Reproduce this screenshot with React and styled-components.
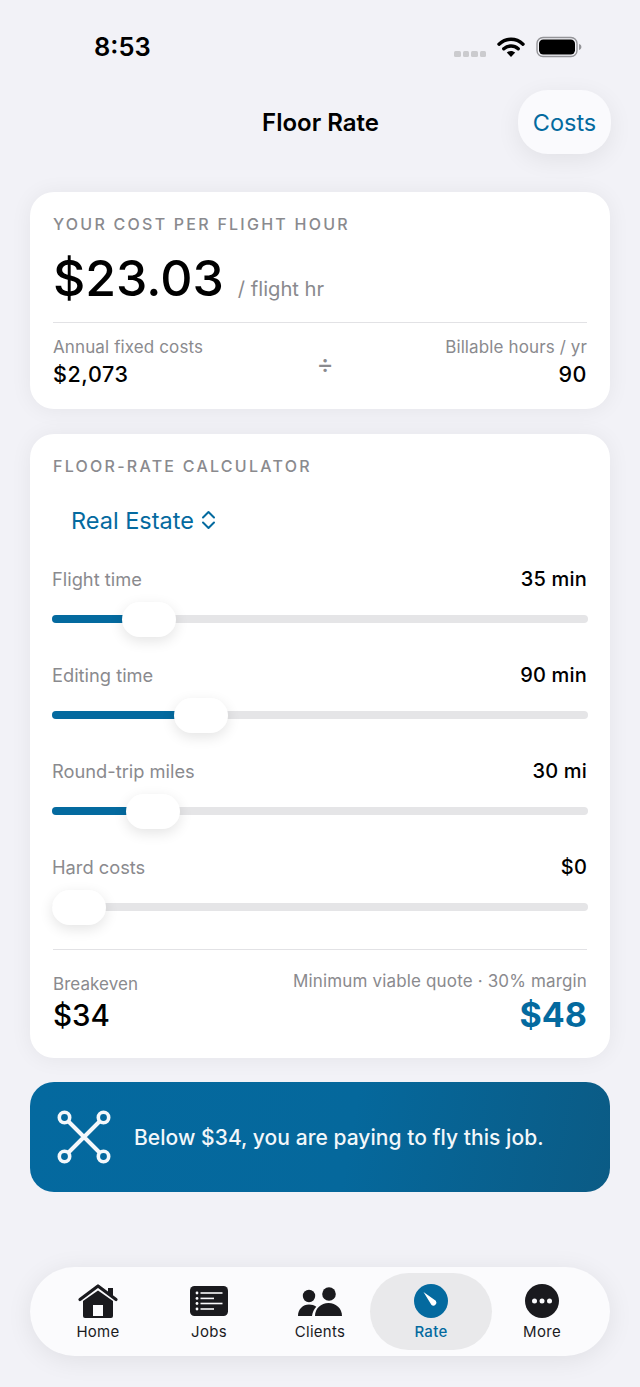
import React from "react";
import styled, { createGlobalStyle } from "styled-components";

const BLUE = "#046a9f";
const INK = "#1a1a1e";

const GlobalStyle = createGlobalStyle`
  html, body {
    margin: 0;
    padding: 0;
    background: #f2f2f7;
    font-family: Inter, "Liberation Sans", sans-serif;
    color: #000;
  }
  * { box-sizing: border-box; }
`;

const Page = styled.div`
  width: 640px;
  height: 1387px;
  display: flex;
  flex-direction: column;
  overflow: hidden;
  background: #f2f2f7;
`;
const StatusBar = styled.div`
  height: 90px;
  padding: 4px 58px 0 94px;
  display: flex;
  align-items: center;
  justify-content: space-between;
`;
const Time = styled.div`
  font-size: 25.5px;
  font-weight: 600;
  line-height: 30px;
`;
const StatusIcons = styled.div`
  display: flex;
  align-items: center;
`;
const SignalDots = styled.div`
  display: flex;
  gap: 2px;
  margin: 13px 11px 0 0;
`;
const SignalDot = styled.span`
  width: 6.5px;
  height: 6px;
  border-radius: 1.5px;
  background: #cbcbce;
`;
const Content = styled.div`
  flex: 1;
  display: flex;
  flex-direction: column;
  padding: 0 30px 31px;
`;
const Header = styled.div`
  height: 64px;
  margin: 0 -1px 38px 0;
  display: grid;
  grid-template-columns: 1fr auto 1fr;
  align-items: center;
`;
const Title = styled.div`
  grid-column: 2;
  font-size: 24px;
  font-weight: 600;
`;
const CostsButton = styled.div`
  justify-self: end;
  width: 93px;
  height: 64px;
  border-radius: 30px;
  background: #fafafd;
  box-shadow: 0 6px 24px rgba(0, 0, 0, 0.07);
  display: flex;
  align-items: center;
  justify-content: center;
  font-size: 23.5px;
  color: ${BLUE};
`;
const Card = styled.div`
  background: #fff;
  border-radius: 24px;
  padding: 22px 23px 0 23px;
  margin-bottom: ${props => props.$gap}px;
  box-shadow: 0 1px 22px rgba(0, 0, 0, 0.06);
`;
const SectionLabel = styled.div`
  font-size: 16px;
  line-height: 20px;
  font-weight: 500;
  letter-spacing: 2.25px;
  color: #8a8a8e;
`;
const PriceRow = styled.div`
  display: flex;
  align-items: baseline;
  gap: 14px;
  margin-top: 14px;
  height: 60px;
  line-height: 60px;
`;
const Price = styled.div`
  font-size: 50px;
  font-weight: 500;
`;
const PriceUnit = styled.div`
  font-size: 20.2px;
  color: #8a8a8e;
`;
const Divider = styled.div`
  height: 1px;
  background: #e2e2e5;
`;
const PriceDivider = styled(Divider)`
  margin-top: 14px;
`;
const FormulaRow = styled.div`
  height: 86px;
  padding-top: 14px;
  display: grid;
  grid-template-columns: 1fr auto 1fr;
  align-items: start;
`;
const FormulaCell = styled.div`
  text-align: ${props => (props.$right ? "right" : "left")};
`;
const SmallLabel = styled.div`
  font-size: 17px;
  line-height: 20px;
  letter-spacing: 0.12px;
  color: #8a8a8e;
`;
const FormulaValue = styled.div`
  font-size: 21.5px;
  line-height: 26px;
  margin-top: 4px;
  font-weight: 500;
  letter-spacing: 0.6px;
`;
const DivideSign = styled.div`
  font-size: 26px;
  color: #8a8a8e;
  line-height: 24px;
  margin: 15px 0 0 10px;
`;
const Picker = styled.div`
  margin: 29px 0 0 18px;
  height: 30px;
  display: flex;
  align-items: center;
  gap: 7px;
  font-size: 23.5px;
  color: ${BLUE};
`;
const Sliders = styled.div`
  margin-top: 32px;
  margin-left: -1px;
`;
const SliderRow = styled.div`
  height: 96px;
`;
const SliderHead = styled.div`
  display: flex;
  justify-content: space-between;
  align-items: center;
  height: 24px;
`;
const SliderLabel = styled.div`
  font-size: 18.3px;
  color: #8a8a8e;
`;
const SliderValue = styled.div`
  font-size: 20px;
  font-weight: 500;
  letter-spacing: 0.2px;
`;
const Track = styled.div`
  position: relative;
  height: 8px;
  margin-top: 24px;
  border-radius: 4px;
  background: #e5e5e7;
  width: 536px;
`;
const TrackFill = styled.div`
  height: 8px;
  border-radius: 4px 0 0 4px;
  background: ${BLUE};
  width: ${props => props.$width}px;
`;
const Thumb = styled.div`
  position: absolute;
  top: -13px;
  left: ${props => props.$left}px;
  width: 54px;
  height: 35px;
  border-radius: 17.5px;
  background: #fff;
  box-shadow: 0 4px 14px rgba(0, 0, 0, 0.11);
`;
const SummaryDivider = styled(Divider)`
  margin-top: -2px;
`;
const SummaryRow = styled.div`
  height: 108px;
  display: flex;
  justify-content: space-between;
`;
const SummaryCell = styled.div`
  text-align: ${props => (props.$right ? "right" : "left")};
  padding-top: ${props => (props.$right ? 21 : 24)}px;
`;
const SummaryLabel = styled(SmallLabel)`
  letter-spacing: ${props => (props.$wide ? 0.15 : 0.05)}px;
`;
const SummaryValue = styled.div`
  line-height: 40px;
  margin-top: ${props => (props.$accent ? 4 : 1)}px;
  color: ${props => (props.$accent ? BLUE : "#000")};
  font-weight: ${props => (props.$accent ? 700 : 500)};
  font-size: ${props => (props.$accent ? 34 : 29.5)}px;
`;
const Banner = styled.div`
  height: 110px;
  border-radius: 24px;
  padding: 0 26px;
  display: flex;
  align-items: center;
  gap: 22px;
  background: linear-gradient(100deg, #04699f 0%, #05689c 55%, #0b5b85 100%);
  color: #f2f7fa;
  font-size: 21px;
  font-weight: 500;
  letter-spacing: 0.05px;
`;
const TabBar = styled.div`
  margin-top: auto;
  height: 89px;
  border-radius: 45px;
  padding: 0 12.5px;
  display: grid;
  grid-template-columns: repeat(5, 111px);
  background: #fbfbfd;
  box-shadow: 0 4px 26px rgba(0, 0, 0, 0.08);
`;
const Tab = styled.div`
  position: relative;
  display: flex;
  flex-direction: column;
  align-items: center;
  color: ${props => (props.$active ? BLUE : INK)};
  font-size: 15px;
  font-weight: ${props => (props.$active ? 500 : 400)};
  letter-spacing: 0.3px;
  &::before {
    content: "";
    display: ${props => (props.$active ? "block" : "none")};
    position: absolute;
    top: 6px;
    bottom: 6px;
    left: -5.5px;
    right: -5.5px;
    border-radius: 39px;
    background: #e9e9eb;
  }
`;
const TabIcon = styled.div`
  position: relative;
  height: 40px;
  margin-top: 14px;
  display: flex;
  align-items: center;
  justify-content: center;
`;
const TabLabel = styled.div`
  position: relative;
  line-height: 20px;
  margin-top: 1px;
`;

const Wifi = () => (
  <svg width="28" height="22" viewBox="0 0 28 22">
    <path d="M2 8.2C9 1.6 19 1.6 26 8.2" fill="none" stroke="#000" strokeWidth="3.4" strokeLinecap="round" />
    <path d="M6.8 12.8C11 9 17 9 21.2 12.8" fill="none" stroke="#000" strokeWidth="3.4" strokeLinecap="round" />
    <path d="M9.8 16.6c2.6-2.2 5.8-2.2 8.4 0L14 21z" fill="#000" />
  </svg>
);

const Battery = () => (
  <svg width="46" height="22" viewBox="0 0 46 22" style={{ marginLeft: 11 }}>
    <rect x="1" y="1.5" width="40" height="19" rx="6" fill="none" stroke="#949498" strokeWidth="1.4" />
    <rect x="3" y="3.5" width="36" height="15" rx="4.2" fill="#000" />
    <path d="M43 8c1.6.4 2.4 1.6 2.4 3s-.8 2.6-2.4 3z" fill="#949498" />
  </svg>
);

const UpDown = () => (
  <svg width="15" height="20" viewBox="0 0 15 20" fill="none" stroke={BLUE} strokeWidth="2" strokeLinecap="round" strokeLinejoin="round">
    <path d="M2 7.5l5.500-5.500 5.500 5.500" />
    <path d="M2 12.500l5.500 5.500 5.500-5.500" />
  </svg>
);

const Drone = () => (
  <svg width="56" height="56" viewBox="0 0 56 56" fill="none" stroke="#f4f8fb" strokeWidth="3.6">
    <path d="M12 12L44 44M44 12L12 44" strokeWidth="4" />
    <circle cx="8.500" cy="8.500" r="5.200" />
    <circle cx="47.500" cy="8.500" r="5.200" />
    <circle cx="8.500" cy="47.500" r="5.200" />
    <circle cx="47.500" cy="47.500" r="5.200" />
  </svg>
);

const HomeIcon = () => (
  <svg width="42" height="36" viewBox="0 0 42 36">
    <path d="M6 18L21 7.500l15 10.500V33a2 2 0 0 1-2 2H8a2 2 0 0 1-2-2z" fill={INK} />
    <path d="M3 16.500L21 3l18 13.500" fill="none" stroke={INK} strokeWidth="3.200" strokeLinecap="round" strokeLinejoin="round" />
    <path d="M31 5h5v10l-5-4z" fill={INK} />
    <rect x="16" y="22" width="10" height="11" fill="#fbfbfd" />
  </svg>
);

const JobsIcon = () => (
  <svg width="38" height="30" viewBox="0 0 38 30">
    <rect width="38" height="30" rx="4.500" fill={INK} />
    <g fill="#fbfbfd">
      <circle cx="7" cy="7" r="1.400" />
      <circle cx="7" cy="12.400" r="1.400" />
      <circle cx="7" cy="17.500" r="1.400" />
      <circle cx="7" cy="23" r="1.400" />
    </g>
    <g stroke="#fbfbfd" strokeWidth="1.600">
      <path d="M10.500 7h22" />
      <path d="M10.500 12.400h13.500" />
      <path d="M10.500 17.500h22" />
      <path d="M10.500 23h13.500" />
    </g>
  </svg>
);

const ClientsIcon = () => (
  <svg width="46" height="32" viewBox="0 0 46 32" fill={INK}>
    <circle cx="12" cy="11" r="6.200" />
    <circle cx="32" cy="9" r="6.800" />
    <path d="M1 31C1 24 6 19.500 12 19.500c2.800 0 5.300.8 7.300 2.200C17 24.200 15.400 27.400 15 31z" />
    <path d="M18 31C18 23.500 24 18 31.500 18S45 23.500 45 31z" />
  </svg>
);

const RateIcon = () => (
  <svg width="34" height="34" viewBox="0 0 34 34">
    <circle cx="17" cy="17" r="17" fill={BLUE} />
    <path d="M9.500 8L21.800 16.800a3 3 0 0 1-4.300 4.100z" fill="#fff" />
  </svg>
);

const MoreIcon = () => (
  <svg width="34" height="34" viewBox="0 0 34 34">
    <circle cx="17" cy="17" r="17" fill={INK} />
    <circle cx="9.500" cy="17" r="2.500" fill="#fbfbfd" />
    <circle cx="17" cy="17" r="2.500" fill="#fbfbfd" />
    <circle cx="24.500" cy="17" r="2.500" fill="#fbfbfd" />
  </svg>
);

const sliders = [
  { label: "Flight time", value: "35 min", fill: 72, thumb: 70 },
  { label: "Editing time", value: "90 min", fill: 124, thumb: 122 },
  { label: "Round-trip miles", value: "30 mi", fill: 76, thumb: 74 },
  { label: "Hard costs", value: "$0", fill: 0, thumb: 0 }
];

const tabs = [
  { label: "Home", Icon: HomeIcon },
  { label: "Jobs", Icon: JobsIcon },
  { label: "Clients", Icon: ClientsIcon },
  { label: "Rate", Icon: RateIcon, active: true },
  { label: "More", Icon: MoreIcon }
];

export default function App() {
  return (
    <Page>
      <GlobalStyle />
      <StatusBar>
        <Time>8:53</Time>
        <StatusIcons>
          <SignalDots>
            <SignalDot />
            <SignalDot />
            <SignalDot />
            <SignalDot />
          </SignalDots>
          <Wifi />
          <Battery />
        </StatusIcons>
      </StatusBar>
      <Content>
        <Header>
          <Title>Floor Rate</Title>
          <CostsButton>Costs</CostsButton>
        </Header>

        <Card $gap={25}>
          <SectionLabel>YOUR COST PER FLIGHT HOUR</SectionLabel>
          <PriceRow>
            <Price>$23.03</Price>
            <PriceUnit>/ flight hr</PriceUnit>
          </PriceRow>
          <PriceDivider />
          <FormulaRow>
            <FormulaCell>
              <SmallLabel>Annual fixed costs</SmallLabel>
              <FormulaValue>$2,073</FormulaValue>
            </FormulaCell>
            <DivideSign>÷</DivideSign>
            <FormulaCell $right>
              <SmallLabel>Billable hours / yr</SmallLabel>
              <FormulaValue>90</FormulaValue>
            </FormulaCell>
          </FormulaRow>
        </Card>

        <Card $gap={24}>
          <SectionLabel>FLOOR-RATE CALCULATOR</SectionLabel>
          <Picker>
            Real Estate
            <UpDown />
          </Picker>
          <Sliders>
            {sliders.map(s => (
              <SliderRow key={s.label}>
                <SliderHead>
                  <SliderLabel>{s.label}</SliderLabel>
                  <SliderValue>{s.value}</SliderValue>
                </SliderHead>
                <Track>
                  <TrackFill $width={s.fill} />
                  <Thumb $left={s.thumb} />
                </Track>
              </SliderRow>
            ))}
          </Sliders>
          <SummaryDivider />
          <SummaryRow>
            <SummaryCell>
              <SummaryLabel>Breakeven</SummaryLabel>
              <SummaryValue>$34</SummaryValue>
            </SummaryCell>
            <SummaryCell $right>
              <SummaryLabel $wide>Minimum viable quote · 30% margin</SummaryLabel>
              <SummaryValue $accent>$48</SummaryValue>
            </SummaryCell>
          </SummaryRow>
        </Card>

        <Banner>
          <Drone />
          Below $34, you are paying to fly this job.
        </Banner>

        <TabBar>
          {tabs.map(({ label, Icon, active }) => (
            <Tab key={label} $active={active}>
              <TabIcon>
                <Icon />
              </TabIcon>
              <TabLabel>{label}</TabLabel>
            </Tab>
          ))}
        </TabBar>
      </Content>
    </Page>
  );
}
